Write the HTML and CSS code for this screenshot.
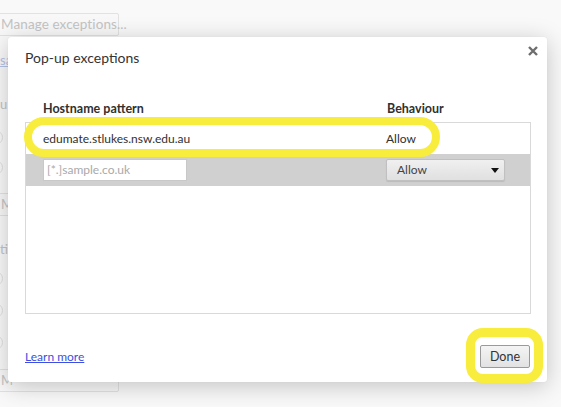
FILE: index.html
```html
<!DOCTYPE html>
<html>
<head>
<meta charset="utf-8">
<link rel="stylesheet" href="styles.css">
</head>
<body>
<div class="page">
  <div class="bg-btn bg-btn-top">Manage exceptions...</div>
  <div class="bg-link">sa</div>
  <div class="bg-text bg-u">u</div>
  <div class="bg-radio r1"></div>
  <div class="bg-radio r2"></div>
  <div class="bg-btn bg-btn-mid">M</div>
  <div class="bg-text bg-ti">ti</div>
  <div class="bg-radio r3"></div>
  <div class="bg-radio r4"></div>
  <div class="bg-radio r5"></div>
  <div class="bg-btn bg-btn-bot">M</div>
</div>

<div class="dialog">
  <div class="dialog-head">
    <h1 class="title">Pop-up exceptions</h1>
    <svg class="close" width="10" height="10" viewBox="0 0 10 10"><path d="M1 1L9 9M9 1L1 9" stroke="#6e6e6e" stroke-width="2.4" fill="none"/></svg>
  </div>
  <div class="cols">
    <span class="col-host">Hostname pattern</span>
    <span class="col-beh">Behaviour</span>
  </div>
  <div class="list">
    <div class="row">
      <span class="cell-host">edumate.stlukes.nsw.edu.au</span>
      <span class="cell-beh">Allow</span>
    </div>
    <div class="row row-new">
      <div class="cell-host"><div class="input">[*.]sample.co.uk</div></div>
      <div class="cell-beh"><div class="select"><span>Allow</span><span class="arrow"></span></div></div>
    </div>
  </div>
  <div class="foot">
    <a class="learn">Learn more</a>
    <div class="done">Done</div>
  </div>
</div>

<div class="hl hl-row"></div>
<div class="hl hl-done"></div>
</body>
</html>
```

FILE: styles.css
```css
html, body {
  margin: 0;
  padding: 0;
}
body {
  width: 561px;
  height: 407px;
  overflow: hidden;
  background: #f9f9f9;
  font-family: Lato, "Open Sans", sans-serif;
  color: #303030;
  position: relative;
}
.page {
  margin-left: -10px;
  padding-top: 13px;
  display: flex;
  flex-direction: column;
  align-items: flex-start;
  font-size: 13px;
  line-height: 16px;
  color: #c4c4c4;
}
.bg-btn {
  width: 129px;
  height: 23px;
  box-sizing: border-box;
  border: 1px solid #e2e2e2;
  border-radius: 2px;
  line-height: 21px;
  padding-left: 10px;
  white-space: nowrap;
  background: #f8f8f8;
  flex: none;
}
.bg-btn-top {
  font-size: 13.5px;
  letter-spacing: 0.1px;
}
.bg-link {
  margin-top: 16px;
  margin-left: 10px;
  color: #b6c3e6;
  text-decoration: underline;
}
.bg-text {
  margin-left: 10px;
}
.bg-u { margin-top: 28px; }
.bg-ti { margin-top: 25px; }
.bg-radio {
  width: 13px;
  height: 13px;
  border: 1px solid #e0e0e0;
  border-radius: 50%;
  margin-left: -2px;
  flex: none;
}
.r1 { margin-top: 17.5px; }
.r2 { margin-top: 15px; }
.r3 { margin-top: 13.5px; }
.r4 { margin-top: 17.5px; }
.r5 { margin-top: 17px; }
.bg-btn-mid { margin-top: 18.5px; }
.bg-btn-bot { margin-top: 18.5px; }

.dialog {
  position: absolute;
  left: 8px;
  top: 37px;
  width: 539px;
  height: 345px;
  box-sizing: border-box;
  background: #fff;
  border-radius: 3px;
  box-shadow: 0 4px 23px rgba(0, 0, 0, 0.22), 0 0 1px rgba(0, 0, 0, 0.1);
  padding: 0 16px 0 17px;
  display: flex;
  flex-direction: column;
}
.dialog-head {
  height: 64px;
  position: relative;
  padding-top: 11px;
  box-sizing: border-box;
}
.title {
  margin: 0;
  font-size: 14px;
  font-weight: normal;
  line-height: 20px;
  color: #333;
}
.close {
  position: absolute;
  right: -7px;
  top: 9px;
}
.cols {
  height: 21px;
  display: flex;
  font-size: 12.5px;
  font-weight: bold;
  line-height: 16px;
  color: #303030;
}
.col-host {
  width: 362px;
  box-sizing: border-box;
  padding-left: 18px;
}
.list {
  height: 192px;
  box-sizing: border-box;
  border: 1px solid #d9d9d9;
}
.row {
  height: 31px;
  display: flex;
  align-items: center;
  font-size: 12px;
  color: #303030;
}
.row-new {
  height: 32px;
  background: #d0d0d0;
}
.cell-host {
  width: 360px;
  padding-left: 17px;
  box-sizing: border-box;
  white-space: nowrap;
}
.input {
  width: 144px;
  height: 22px;
  box-sizing: border-box;
  background: #fff;
  border: 1px solid #c8c8c8;
  color: #a9a9a9;
  line-height: 20px;
  padding-left: 3px;
}
.select {
  width: 119px;
  height: 22px;
  box-sizing: border-box;
  border: 1px solid #c0c0c0;
  border-radius: 2px;
  background: linear-gradient(#f0f0f0, #e0e0e0);
  box-shadow: 0 1px 1px rgba(0, 0, 0, 0.1);
  display: flex;
  align-items: center;
  justify-content: space-between;
  padding: 0 5px 0 10px;
  line-height: 20px;
  color: #444;
}
.arrow {
  width: 0;
  height: 0;
  border-left: 4px solid transparent;
  border-right: 4px solid transparent;
  border-top: 5px solid #111;
}
.foot {
  flex: 1;
  display: flex;
  align-items: center;
  justify-content: space-between;
  padding: 17px 1px 0 0;
}
.learn {
  font-size: 12px;
  color: #3d4fe0;
  text-decoration: underline;
}
.done {
  width: 50px;
  height: 23px;
  box-sizing: border-box;
  border: 1px solid #9a9a9a;
  border-radius: 2px;
  background: linear-gradient(#f4f4f4, #e2e2e2);
  font-size: 12.5px;
  line-height: 21px;
  text-align: center;
  color: #333;
}
.hl {
  position: absolute;
  box-sizing: border-box;
  border-style: solid;
  border-color: #f8ec3c;
}
.hl-row {
  left: 24px;
  top: 117px;
  width: 416px;
  height: 40px;
  border-width: 8px;
  border-radius: 20px;
}
.hl-done {
  left: 466px;
  top: 328px;
  width: 77px;
  height: 55px;
  border-width: 9px;
  border-radius: 17px;
}
```
